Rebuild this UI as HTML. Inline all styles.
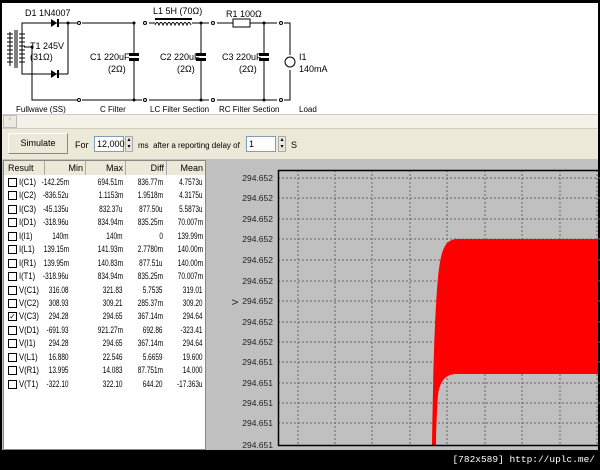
<!DOCTYPE html>
<html><head><meta charset="utf-8"><style>
*{margin:0;padding:0;box-sizing:border-box}
body{width:600px;height:470px;background:#000;position:relative;overflow:hidden;font-family:"Liberation Sans",sans-serif;font-size:9px;color:#000}
.abs{position:absolute}
.r{position:relative;height:13.45px;font-size:9px}
.r span{position:absolute;top:0;text-align:right;white-space:nowrap;transform:scaleX(.72);transform-origin:right center}
.cb{position:absolute;left:4px;top:2px;width:9px;height:9px;border:1.5px solid #000;font-size:8px;line-height:7px;text-align:center}
.r span.n{left:15px;text-align:left;transform-origin:left center;transform:scaleX(.85)}
.a{right:136px}.b{right:82px}.c{right:42px}.d{right:2px}
</style></head><body>
<div class="abs" style="left:2px;top:3px;width:596px;height:111px;background:#fff"></div>
<svg class="abs" style="left:0;top:0" width="600" height="120" font-family="Liberation Sans, sans-serif" font-size="9">
<g stroke="#000" fill="none" stroke-width="1">
<path d="M10 32v34M22 32v34M15 30v38M17 30v38"/>
<path d="M7 34h6M7 38h6M7 42h6M7 46h6M7 50h6M7 54h6M7 58h6M7 62h6M19 34h6M19 38h6M19 42h6M19 46h6M19 50h6M19 54h6M19 58h6M19 62h6"/>
<path d="M22 32V23H78M22 66v8H68M24 47h8V100H78M68 23v51"/>
<path d="M82 23h52M134 23v30M134 61v39M82 100h60"/>
<path d="M149 23h6M192 23h17M201 23v30M201 61v39M149 100h60"/>
<path d="M217 23h16M250 23h27M264 23v30M264 61v39M217 100h60M284 23h6v32M290 70v30H284"/>
<rect x="233" y="19" width="17" height="8"/>
<circle cx="290" cy="62" r="5"/>
<circle cx="79" cy="23" r="1.5"/><circle cx="145" cy="23" r="1.5"/><circle cx="213" cy="23" r="1.5"/><circle cx="281" cy="23" r="1.5"/>
<circle cx="79" cy="100" r="1.5"/><circle cx="145" cy="100" r="1.5"/><circle cx="213" cy="100" r="1.5"/><circle cx="281" cy="100" r="1.5"/>
</g>
<g fill="#000">
<path d="M51 19v8l6-4z"/><rect x="57" y="19" width="2" height="8"/>
<path d="M51 70v8l6-4z"/><rect x="57" y="70" width="2" height="8"/>
<rect x="129" y="53" width="10" height="3"/><rect x="129" y="58" width="10" height="3"/>
<rect x="196" y="53" width="10" height="3"/><rect x="196" y="58" width="10" height="3"/>
<rect x="259" y="53" width="10" height="3"/><rect x="259" y="58" width="10" height="3"/>
<rect x="155" y="18" width="37" height="2"/>
<circle cx="68" cy="23" r="1.5"/><circle cx="134" cy="23" r="1.5"/><circle cx="134" cy="100" r="1.5"/><circle cx="201" cy="23" r="1.5"/><circle cx="201" cy="100" r="1.5"/><circle cx="264" cy="23" r="1.5"/><circle cx="264" cy="100" r="1.5"/><circle cx="32" cy="47" r="1.5"/>
</g>
<path d="M155 25q2-5 4 0q2-5 4 0q2-5 4 0q2-5 4 0q2-5 4 0q2-5 4 0q2-5 4 0q2-5 4 0q2-5 4 0" stroke="#000" fill="none"/>
<text x="25" y="16">D1 1N4007</text>
<text x="153" y="14">L1 5H (70Ω)</text>
<text x="226" y="17">R1 100Ω</text>
<text x="30" y="49">T1 245V</text>
<text x="30" y="60">(31Ω)</text>
<text x="90" y="60">C1 220uF</text><text x="108" y="72">(2Ω)</text>
<text x="160" y="60">C2 220uF</text><text x="177" y="72">(2Ω)</text>
<text x="222" y="60">C3 220uF</text><text x="239" y="72">(2Ω)</text>
<text x="299" y="60">I1</text><text x="299" y="72">140mA</text>
<g font-size="8">
<text x="16" y="112">Fullwave (SS)</text>
<text x="100" y="112">C Filter</text>
<text x="150" y="112">LC Filter Section</text>
<text x="219" y="112">RC Filter Section</text>
<text x="299" y="112">Load</text>
</g>
</svg>
<div class="abs" style="left:2px;top:114px;width:596px;height:15px;background:#f3f1e8;border-top:1px solid #ccc;border-bottom:1px solid #d0cdc0"></div>
<div class="abs" style="left:3px;top:115px;width:14px;height:13px;background:#eceae0;border:1px solid #bbb;font-size:7px;color:#888;text-align:center">‹</div>
<div class="abs" style="left:2px;top:129px;width:596px;height:30px;background:#ece9d8"></div>
<div class="abs" style="left:8px;top:133px;width:60px;height:21px;background:#ece9d8;border:1px solid #888;border-top-color:#fff;border-left-color:#fff;text-align:center;line-height:19px;font-size:9px">Simulate</div>
<div class="abs" style="left:75px;top:140px">For</div>
<div class="abs" style="left:94px;top:136px;width:30px;height:16px;background:#fff;border:1px solid #7f9db9;padding-left:2px;line-height:14px">12,000</div>
<div class="abs" style="left:125px;top:136px;width:8px;height:16px;background:#e8e6dc;border:1px solid #aaa;font-size:6px;line-height:7px;text-align:center">▴<br>▾</div>
<div class="abs" style="left:138px;top:141px;font-size:8px;white-space:nowrap">ms &nbsp;after a reporting delay of</div>
<div class="abs" style="left:246px;top:136px;width:30px;height:16px;background:#fff;border:1px solid #7f9db9;padding-left:2px;line-height:14px">1</div>
<div class="abs" style="left:278px;top:136px;width:8px;height:16px;background:#e8e6dc;border:1px solid #aaa;font-size:6px;line-height:7px;text-align:center">▴<br>▾</div>
<div class="abs" style="left:291px;top:140px">S</div>
<div class="abs" style="left:2px;top:159px;width:596px;height:291px;background:#c0c0c0"></div>
<div class="abs" style="left:3px;top:160px;width:203px;height:290px;background:#fff;border:1px solid #888"></div>
<div class="abs" style="left:4px;top:161px;width:201px;height:14px;background:#ece9d8;line-height:14px">
<span class="abs" style="left:4px">Result</span>
<span class="abs" style="left:40px;width:41px;text-align:right;padding-right:2px;border-left:1px solid #aaa">Min</span>
<span class="abs" style="left:81px;width:40px;text-align:right;padding-right:2px;border-left:1px solid #aaa">Max</span>
<span class="abs" style="left:121px;width:41px;text-align:right;padding-right:2px;border-left:1px solid #aaa">Diff</span>
<span class="abs" style="left:162px;width:39px;text-align:right;padding-right:2px;border-left:1px solid #aaa">Mean</span>
</div>
<div class="abs" style="left:4px;top:176px;width:201px;line-height:13.45px">
<div class="r"><div class="cb"></div><span class="n">I(C1)</span><span class="a">-142.25m</span><span class="b">694.51m</span><span class="c">836.77m</span><span class="d">4.7573u</span></div>
<div class="r"><div class="cb"></div><span class="n">I(C2)</span><span class="a">-836.52u</span><span class="b">1.1153m</span><span class="c">1.9518m</span><span class="d">4.3175u</span></div>
<div class="r"><div class="cb"></div><span class="n">I(C3)</span><span class="a">-45.135u</span><span class="b">832.37u</span><span class="c">877.50u</span><span class="d">5.5873u</span></div>
<div class="r"><div class="cb"></div><span class="n">I(D1)</span><span class="a">-318.96u</span><span class="b">834.94m</span><span class="c">835.25m</span><span class="d">70.007m</span></div>
<div class="r"><div class="cb"></div><span class="n">I(I1)</span><span class="a">140m</span><span class="b">140m</span><span class="c">0</span><span class="d">139.99m</span></div>
<div class="r"><div class="cb"></div><span class="n">I(L1)</span><span class="a">139.15m</span><span class="b">141.93m</span><span class="c">2.7780m</span><span class="d">140.00m</span></div>
<div class="r"><div class="cb"></div><span class="n">I(R1)</span><span class="a">139.95m</span><span class="b">140.83m</span><span class="c">877.51u</span><span class="d">140.00m</span></div>
<div class="r"><div class="cb"></div><span class="n">I(T1)</span><span class="a">-318.96u</span><span class="b">834.94m</span><span class="c">835.25m</span><span class="d">70.007m</span></div>
<div class="r"><div class="cb"></div><span class="n">V(C1)</span><span class="a">316.08</span><span class="b">321.83</span><span class="c">5.7535</span><span class="d">319.01</span></div>
<div class="r"><div class="cb"></div><span class="n">V(C2)</span><span class="a">308.93</span><span class="b">309.21</span><span class="c">285.37m</span><span class="d">309.20</span></div>
<div class="r"><div class="cb">✓</div><span class="n">V(C3)</span><span class="a">294.28</span><span class="b">294.65</span><span class="c">367.14m</span><span class="d">294.64</span></div>
<div class="r"><div class="cb"></div><span class="n">V(D1)</span><span class="a">-691.93</span><span class="b">921.27m</span><span class="c">692.86</span><span class="d">-323.41</span></div>
<div class="r"><div class="cb"></div><span class="n">V(I1)</span><span class="a">294.28</span><span class="b">294.65</span><span class="c">367.14m</span><span class="d">294.64</span></div>
<div class="r"><div class="cb"></div><span class="n">V(L1)</span><span class="a">16.880</span><span class="b">22.546</span><span class="c">5.6659</span><span class="d">19.600</span></div>
<div class="r"><div class="cb"></div><span class="n">V(R1)</span><span class="a">13.995</span><span class="b">14.083</span><span class="c">87.751m</span><span class="d">14.000</span></div>
<div class="r"><div class="cb"></div><span class="n">V(T1)</span><span class="a">-322.10</span><span class="b">322.10</span><span class="c">644.20</span><span class="d">-17.363u</span></div>
</div>
<svg class="abs" style="left:0;top:0" width="600" height="470" font-family="Liberation Sans, sans-serif" font-size="8.5">
<g stroke="#666" stroke-dasharray="2,2" stroke-width="1">
<path d="M298 170V445M335 170V445M372 170V445M410 170V445M447 170V445M485 170V445M522 170V445M560 170V445M597 170V445"/>
<path d="M278 178H600M278 198H600M278 219H600M278 239H600M278 260H600M278 281H600M278 301H600M278 322H600M278 342H600M278 362H600M278 383H600M278 403H600M278 423H600"/>
</g>
<path d="M432 445C433 380 435 290 440 262C443 246 447 240 456 239H598V374H455C446 375 440 380 438 395C437 410 436 430 436 445Z" fill="#f00"/>
<path d="M278.5 170V445.5H598M278 170.5H598" stroke="#000" stroke-width="1.5" fill="none"/>
<g text-anchor="end" fill="#222">
<text x="273" y="181">294.652</text><text x="273" y="201">294.652</text><text x="273" y="222">294.652</text><text x="273" y="242">294.652</text><text x="273" y="263">294.652</text><text x="273" y="284">294.652</text><text x="273" y="304">294.652</text><text x="273" y="325">294.652</text><text x="273" y="345">294.652</text><text x="273" y="365">294.651</text><text x="273" y="386">294.651</text><text x="273" y="406">294.651</text><text x="273" y="426">294.651</text><text x="273" y="448">294.651</text>
</g>
<text x="238" y="305" transform="rotate(-90 238 305)" fill="#222">V</text>
</svg>
<div class="abs" style="right:5px;top:454px;color:#fff;font-family:'Liberation Mono',monospace;font-size:9.5px">[782x589] http://uplc.me/</div>
</body></html>
